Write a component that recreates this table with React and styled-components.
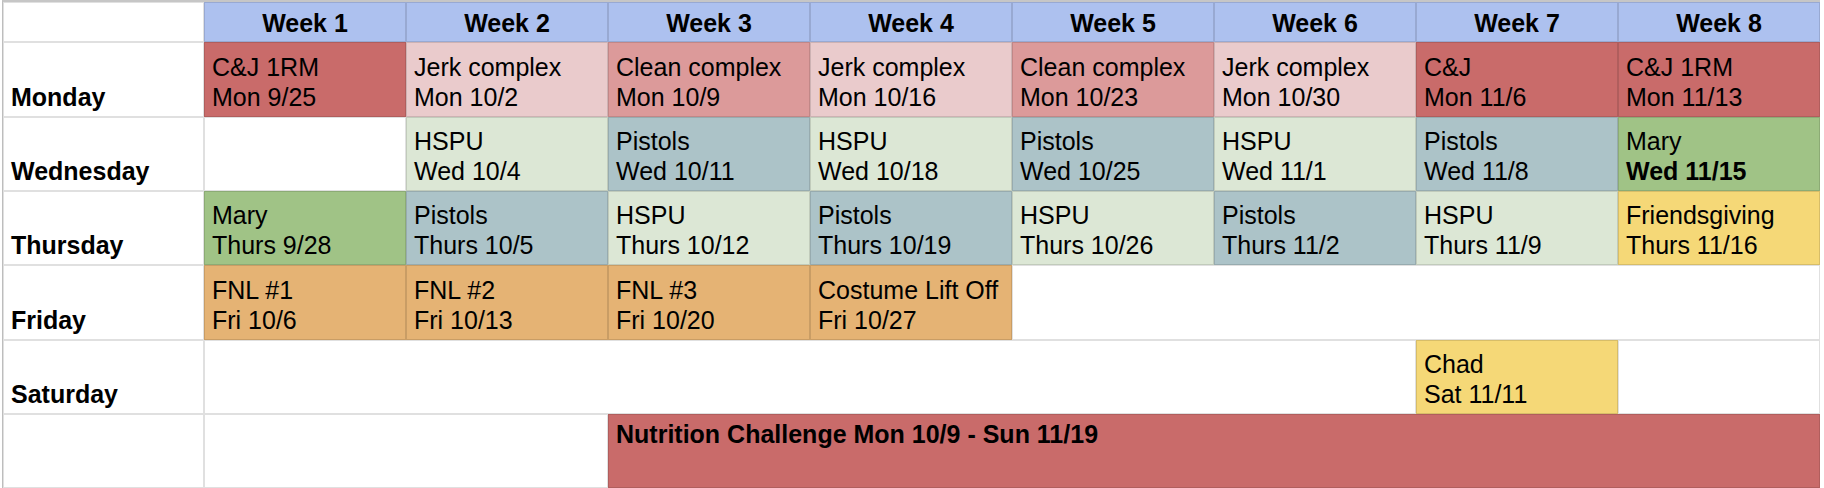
import React from "react";
import styled, { createGlobalStyle } from "styled-components";

const GlobalStyle = createGlobalStyle`
  html, body {
    margin: 0;
    padding: 0;
    background: #ffffff;
  }
  body {
    font-family: "Liberation Sans", Arial, sans-serif;
    color: #000;
  }
`;

const COLORS = {
  red: "#c96b6a",
  pink: "#eacbcc",
  rose: "#dc9a9a",
  mint: "#dce7d5",
  teal: "#acc3c8",
  green: "#a0c386",
  yellow: "#f5d877",
  orange: "#e5b374",
  blue: "#adc1ef",
  white: "#ffffff",
};

const Frame = styled.div`
  padding-left: 2px;
  width: 1824px;
  box-sizing: border-box;
  overflow: hidden;
`;

const Sheet = styled.div`
  display: grid;
  grid-template-columns: 201px repeat(8, 202px);
  grid-template-rows: 40px 75px 74px 74px 75px 74px 74px;
  border-top: 2px solid #c6c6c6;
  border-left: 1px solid #bdbdbd;
  width: max-content;
  font-size: 25px;
  line-height: 30px;
`;

const Cell = styled.div`
  box-sizing: border-box;
  border: 1px solid rgba(0, 0, 0, 0.12);
  background: ${(p) => COLORS[p.$bg] || COLORS.white};
  grid-column: span ${(p) => p.$span || 1};
  display: flex;
  flex-direction: column;
  justify-content: ${(p) => (p.$top ? "flex-start" : "flex-end")};
  padding: ${(p) => (p.$top ? "4px 7px 0 7px" : "0 7px 4px 7px")};
  overflow: hidden;
  white-space: nowrap;
  font-weight: ${(p) => (p.$bold ? 700 : 400)};
`;

const HeaderCell = styled(Cell)`
  align-items: center;
  padding-bottom: 3px;
  font-weight: 700;
`;

const DayLabel = styled(Cell)`
  font-weight: 700;
`;

const Line = styled.span`
  display: block;
  font-weight: ${(p) => (p.$bold ? 700 : "inherit")};
`;

const weeks = ["Week 1", "Week 2", "Week 3", "Week 4", "Week 5", "Week 6", "Week 7", "Week 8"];

const rows = [
  {
    day: "Monday",
    cells: [
      { bg: "red", lines: ["C&J 1RM", "Mon 9/25"] },
      { bg: "pink", lines: ["Jerk complex", "Mon 10/2"] },
      { bg: "rose", lines: ["Clean complex", "Mon 10/9"] },
      { bg: "pink", lines: ["Jerk complex", "Mon 10/16"] },
      { bg: "rose", lines: ["Clean complex", "Mon 10/23"] },
      { bg: "pink", lines: ["Jerk complex", "Mon 10/30"] },
      { bg: "red", lines: ["C&J", "Mon 11/6"] },
      { bg: "red", lines: ["C&J 1RM", "Mon 11/13"] },
    ],
  },
  {
    day: "Wednesday",
    cells: [
      { lines: [] },
      { bg: "mint", lines: ["HSPU", "Wed 10/4"] },
      { bg: "teal", lines: ["Pistols", "Wed 10/11"] },
      { bg: "mint", lines: ["HSPU", "Wed 10/18"] },
      { bg: "teal", lines: ["Pistols", "Wed 10/25"] },
      { bg: "mint", lines: ["HSPU", "Wed 11/1"] },
      { bg: "teal", lines: ["Pistols", "Wed 11/8"] },
      { bg: "green", lines: ["Mary", "Wed 11/15"], boldLast: true },
    ],
  },
  {
    day: "Thursday",
    cells: [
      { bg: "green", lines: ["Mary", "Thurs 9/28"] },
      { bg: "teal", lines: ["Pistols", "Thurs 10/5"] },
      { bg: "mint", lines: ["HSPU", "Thurs 10/12"] },
      { bg: "teal", lines: ["Pistols", "Thurs 10/19"] },
      { bg: "mint", lines: ["HSPU", "Thurs 10/26"] },
      { bg: "teal", lines: ["Pistols", "Thurs 11/2"] },
      { bg: "mint", lines: ["HSPU", "Thurs 11/9"] },
      { bg: "yellow", lines: ["Friendsgiving", "Thurs 11/16"] },
    ],
  },
  {
    day: "Friday",
    cells: [
      { bg: "orange", lines: ["FNL #1", "Fri 10/6"] },
      { bg: "orange", lines: ["FNL #2", "Fri 10/13"] },
      { bg: "orange", lines: ["FNL #3", "Fri 10/20"] },
      { bg: "orange", lines: ["Costume Lift Off", "Fri 10/27"] },
      { span: 4, lines: [] },
    ],
  },
  {
    day: "Saturday",
    cells: [
      { span: 6, lines: [] },
      { bg: "yellow", lines: ["Chad", "Sat 11/11"] },
      { lines: [] },
    ],
  },
  {
    day: "",
    cells: [
      { span: 2, lines: [] },
      { span: 6, bg: "red", top: true, bold: true, lines: ["Nutrition Challenge Mon 10/9 - Sun 11/19"] },
    ],
  },
];

export default function App() {
  return (
    <>
      <GlobalStyle />
      <Frame>
        <Sheet>
          <HeaderCell />
          {weeks.map((w) => (
            <HeaderCell key={w} $bg="blue">
              {w}
            </HeaderCell>
          ))}
          {rows.map((row, ri) => (
            <React.Fragment key={ri}>
              <DayLabel>{row.day}</DayLabel>
              {row.cells.map((c, ci) => (
                <Cell key={ci} $bg={c.bg} $span={c.span} $top={c.top} $bold={c.bold}>
                  {c.lines.map((l, li) => (
                    <Line key={li} $bold={c.boldLast && li === c.lines.length - 1}>
                      {l}
                    </Line>
                  ))}
                </Cell>
              ))}
            </React.Fragment>
          ))}
        </Sheet>
      </Frame>
    </>
  );
}
